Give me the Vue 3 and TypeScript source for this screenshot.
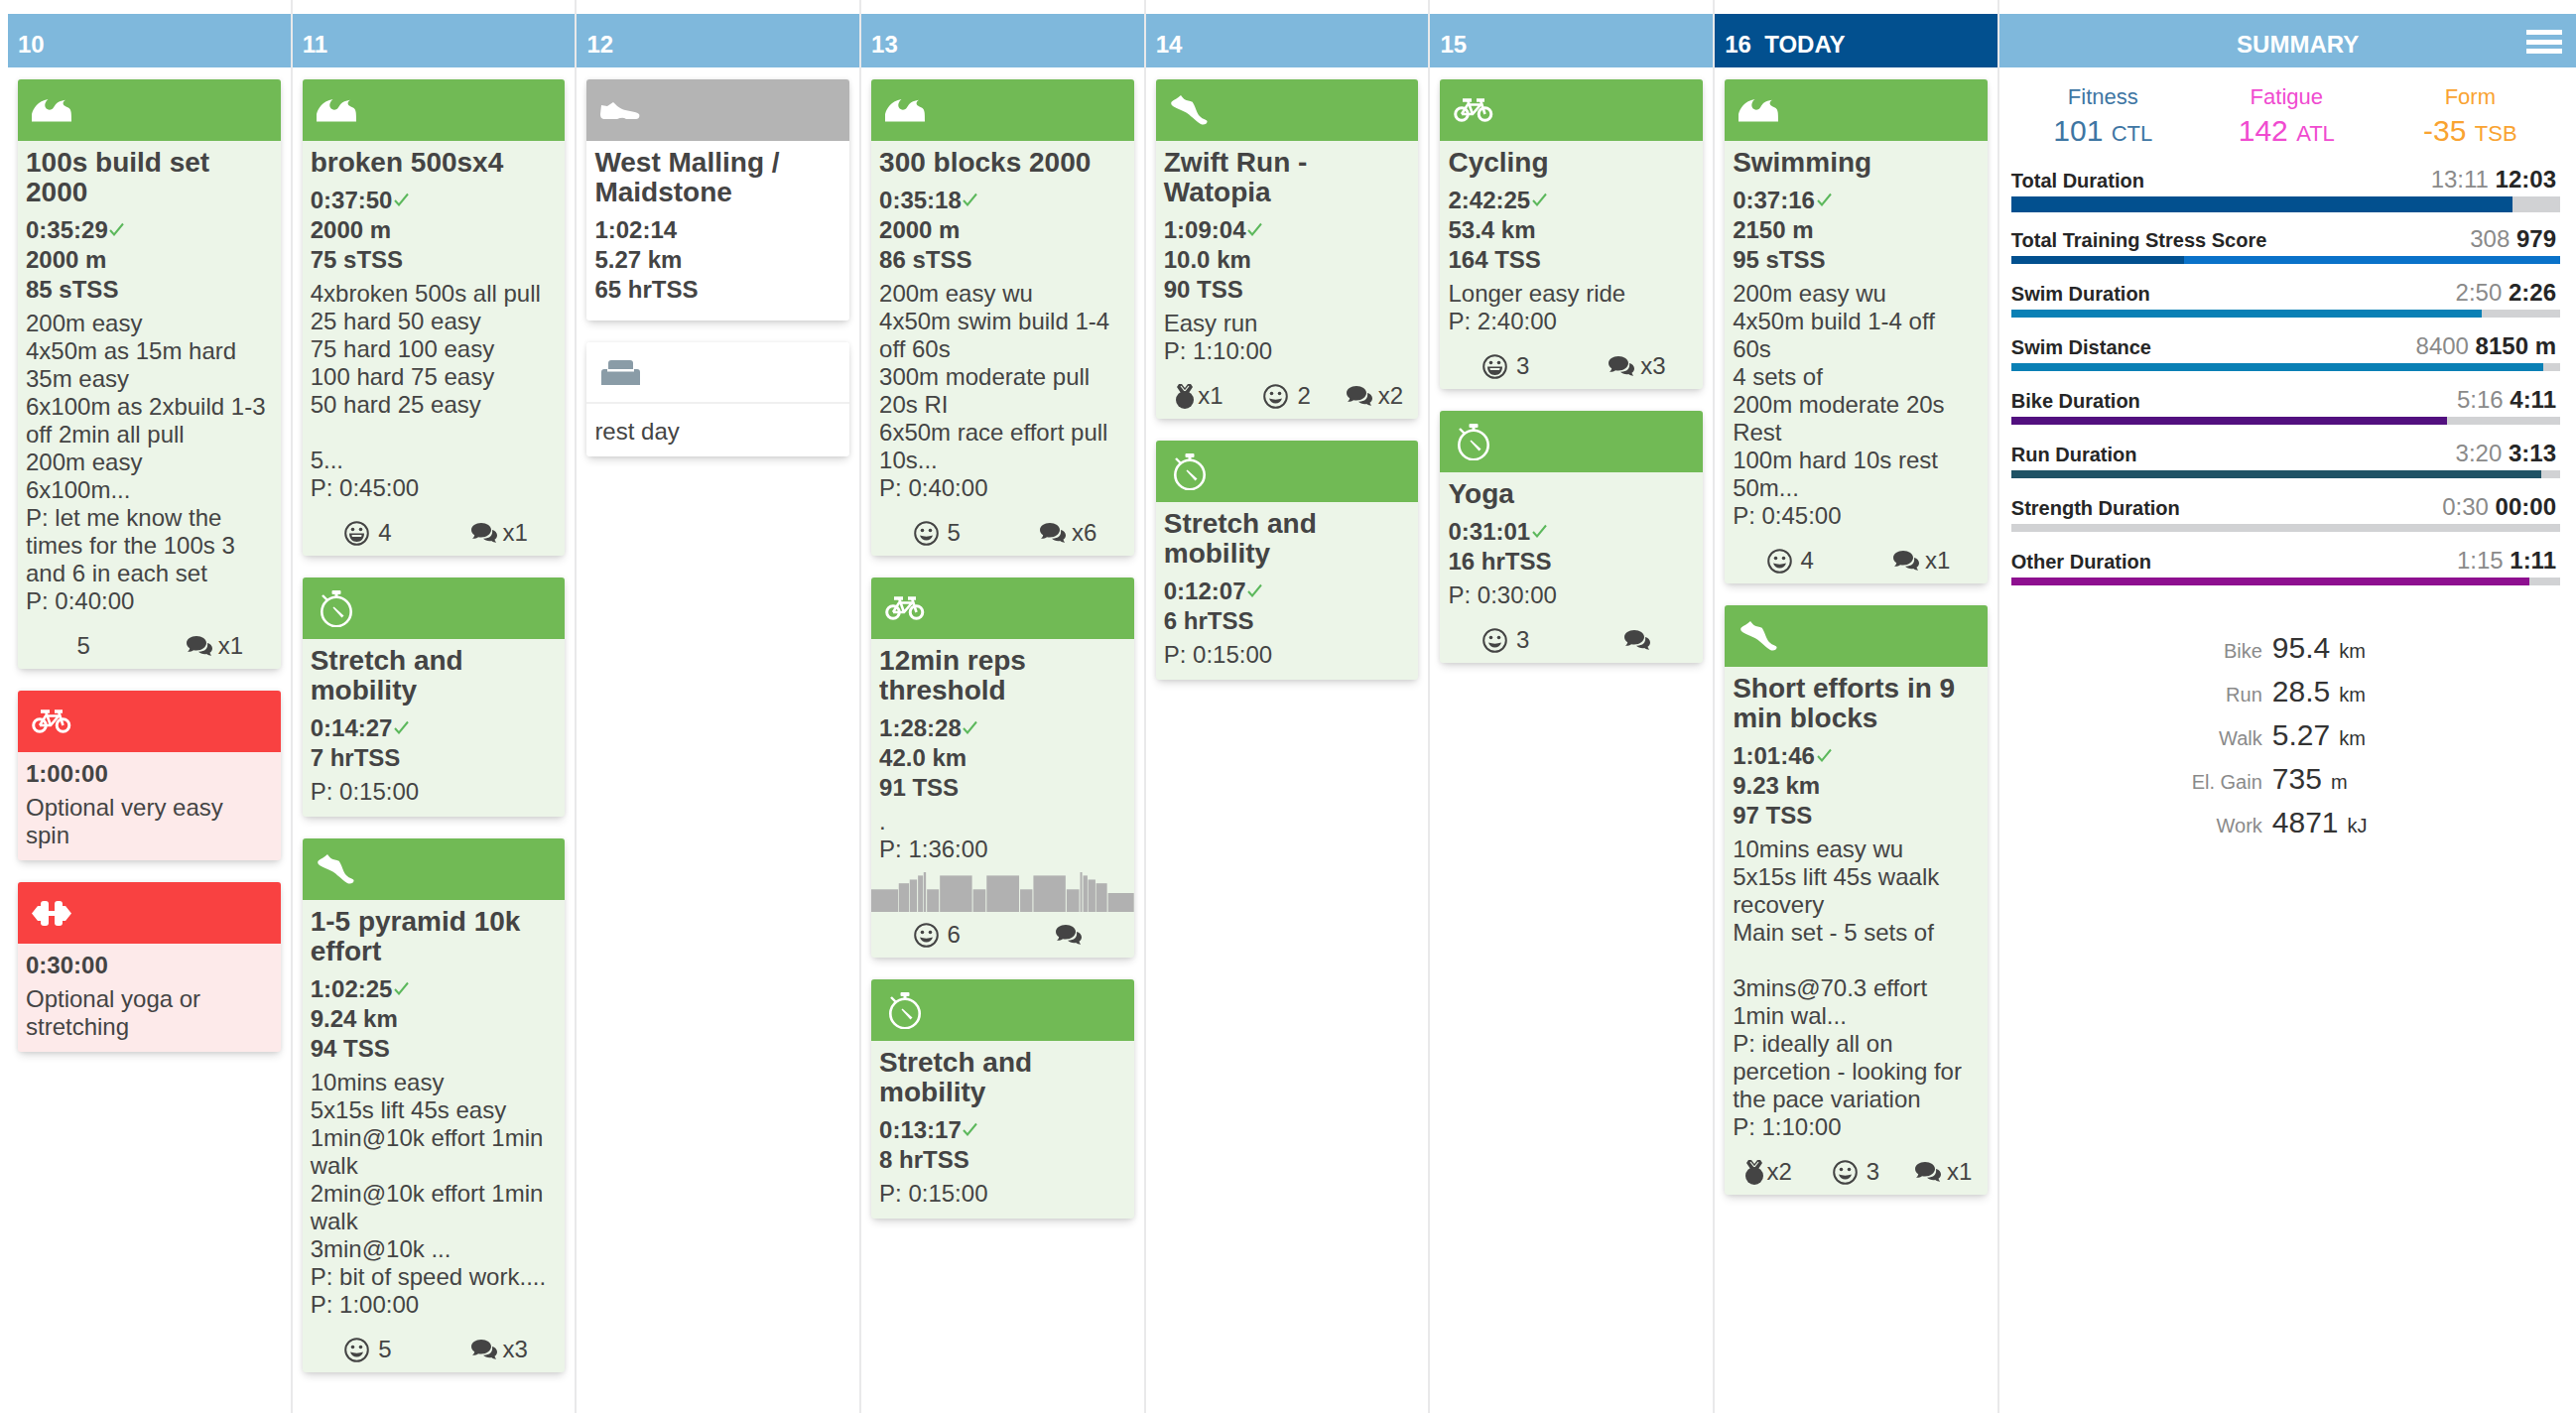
<template>
  <div class="board">
    <section v-for="day in days" :key="day.label" class="day">
      <header class="day-head" :class="{ today: day.today }">{{ day.label }}</header>
      <div class="day-cards">
        <article v-for="(card, i) in day.cards" :key="i" class="card" :class="card.tone">
          <div class="card-head">
            <span class="sport">
              <svg
                :width="icons[card.icon].w"
                :height="icons[card.icon].h"
                :viewBox="`0 0 ${icons[card.icon].w} ${icons[card.icon].h}`"
                v-html="icons[card.icon].body"
              ></svg>
            </span>
          </div>
          <div class="card-body">
            <h3 v-if="card.title" class="title">{{ card.title }}</h3>
            <div v-if="card.time || card.stats" class="stats">
              <div v-if="card.time">
                {{ card.time }}
                <svg v-if="card.done" class="check" width="15" height="14" viewBox="0 0 15 14">
                  <path d="M1 8l4 4.500L14 1.500" fill="none" stroke="#5cb85c" stroke-width="2" />
                </svg>
              </div>
              <div v-for="s in card.stats" :key="s">{{ s }}</div>
            </div>
            <p v-if="card.desc" class="desc">{{ card.desc }}</p>
          </div>
          <svg v-if="card.chart" class="chart" viewBox="0 0 792 118" preserveAspectRatio="none">
            <rect
              v-for="(b, j) in workout"
              :key="j"
              :x="b[0]"
              :y="118 - b[2]"
              :width="b[1] - b[0]"
              :height="b[2]"
              fill="#b1b1b1"
            />
          </svg>
          <footer v-if="hasFooter(card)" class="card-foot" :class="{ chartfoot: card.chart }">
            <span v-if="card.medals" class="foot-item tight">
              <svg width="18" height="25" viewBox="0 0 18 25" v-html="medalIcon"></svg>x{{ card.medals }}
            </span>
            <span v-if="card.feel !== undefined" class="foot-item">
              <svg v-if="card.mood !== 'none'" width="25" height="25" viewBox="0 0 25 25" v-html="card.mood === 'grin' ? grinIcon : smileIcon"></svg>
              {{ card.feel }}
            </span>
            <span v-if="card.comments !== undefined" class="foot-item talk">
              <svg width="26" height="20" viewBox="0 0 26 20" v-html="commentIcon"></svg>
              <template v-if="card.comments">x{{ card.comments }}</template>
            </span>
          </footer>
        </article>
      </div>
    </section>

    <aside class="summary">
      <header class="summary-head">
        SUMMARY
        <span class="burger"><i></i><i></i><i></i></span>
      </header>
      <div class="fitness">
        <div v-for="f in fitness" :key="f.name" class="fit" :style="{ color: f.color }">
          <div class="fit-name">{{ f.name }}</div>
          <div class="fit-val">{{ f.value }} <small>{{ f.unit }}</small></div>
        </div>
      </div>
      <div class="totals">
        <div v-for="r in rows" :key="r.name" class="total">
          <div class="total-line">
            <span class="total-name">{{ r.name }}</span>
            <span class="total-vals"><span class="planned">{{ r.planned }}</span> <b>{{ r.actual }}</b></span>
          </div>
          <div class="bar" :class="{ thick: r.thick }" :style="{ background: r.track || '#d1d2d4' }">
            <div class="bar-fill" :style="{ width: r.pct + '%', background: r.color }"></div>
          </div>
        </div>
      </div>
      <div class="distances">
        <div v-for="d in distances" :key="d.name" class="dist">
          <span class="dist-name">{{ d.name }}</span>
          <span class="dist-val">{{ d.value }}</span>
          <span class="dist-unit">{{ d.unit }}</span>
        </div>
      </div>
    </aside>
  </div>
</template>

<script setup lang="ts">
type IconName = 'swim' | 'run' | 'walk' | 'bike' | 'clock' | 'weights' | 'rest'

interface Card {
  icon: IconName
  tone: 'done' | 'missed' | 'plain'
  title?: string
  time?: string
  done?: boolean
  stats?: string[]
  desc?: string
  chart?: boolean
  medals?: number
  feel?: number
  mood?: 'smile' | 'grin' | 'none'
  comments?: number
}

const W = '#fff'

const icons: Record<IconName, { w: number; h: number; body: string }> = {
  swim: {
    w: 40,
    h: 23,
    body: `<path fill="${W}" d="M0 22.500V15C1.500 9 6 2 16.500 0 13.500 2.500 12.500 6 14 8.500c1.500 2.500 5.500 3 7.500.5C23.500 6.500 24 2 34 .7c-3 1.800-3 4.300-1 5.800 2 1.500 5 2 5.500 3.500 1.500 2 1.500 6 1.500 12.500z"/>`
  },
  run: {
    w: 37,
    h: 30,
    body: `<path fill="${W}" d="M10 0C7 3 3 4.500.8 6.500-.5 8 .5 10 2 11c4 2.500 9 4 13 6.300 4 2.200 10 8.700 15 11.700 3 1.500 7 0 6.500-3-1.500-2-5.500-2-8.500-6-2-3-4-10-6.300-13.300-2.700-1.200-5.700-1.200-8.200-2.700C12 3 11 1 10 0z"/>`
  },
  walk: {
    w: 40,
    h: 17,
    body: `<path fill="${W}" d="M1 3c2 0 4 1 6 1 2-1 4-3 6-4 3 3 5 5 9 7 5 2 14 2 17 5 1 2 0 5-3 5H26c-3-2-6-1-9 0H5c-4 0-5-2-5-5z"/>`
  },
  bike: {
    w: 40,
    h: 24,
    body: `<g fill="none" stroke="${W}" stroke-width="3"><circle cx="8" cy="16" r="6.300"/><circle cx="31.500" cy="16" r="6.300"/><path d="M8 16L14 6.500H27L19 16H8M14 2l5 14M27 2l4.500 14" stroke-width="2.600"/><path d="M9 2h9M23 2h8" stroke-width="3.400"/></g>`
  },
  clock: {
    w: 34,
    h: 37,
    body: `<rect x="12.500" y="0" width="9" height="4" rx="1" fill="${W}"/><rect x="15.500" y="3" width="3" height="4" fill="${W}"/><path d="M3 5l5 5" stroke="${W}" stroke-width="2.400"/><circle cx="17" cy="21.500" r="14.700" fill="none" stroke="${W}" stroke-width="2.600"/><path d="M14.500 16.500l10 9-2 2-9-10z" fill="${W}"/>`
  },
  weights: {
    w: 40,
    h: 25,
    body: `<g fill="${W}"><rect x="9" y="0" width="8" height="25" rx="3"/><rect x="23" y="0" width="8" height="25" rx="3"/><rect x="15" y="10" width="10" height="5"/><path d="M10 5H6L0 12.500 6 20h4zM30 5h4l6 7.500-6 7.500h-4z"/></g>`
  },
  rest: {
    w: 39,
    h: 25,
    body: `<g fill="#8a9ca7"><path d="M7 3a3 3 0 0 1 3-3h19a3 3 0 0 1 3 3v6H7z"/><path d="M0 12a3 3 0 0 1 3-3h3v2.500h27V9h3a3 3 0 0 1 3 3v13H0z"/></g>`
  }
}

const INK = '#444'
const smileIcon = `<circle cx="12.500" cy="12.500" r="11.300" fill="none" stroke="${INK}" stroke-width="2"/><circle cx="8.500" cy="9.500" r="1.800" fill="${INK}"/><circle cx="16.500" cy="9.500" r="1.800" fill="${INK}"/><path d="M6 14.500c1 3.500 3.500 5 6.500 5s5.500-1.500 6.500-5c-4 1.500-9 1.500-13 0z" fill="${INK}"/>`
const grinIcon = `<circle cx="12.500" cy="12.500" r="11.300" fill="none" stroke="${INK}" stroke-width="2"/><circle cx="8.500" cy="8.500" r="1.800" fill="${INK}"/><circle cx="16.500" cy="8.500" r="1.800" fill="${INK}"/><path d="M5 12.500h15c0 5-3 8.500-7.500 8.500S5 17.500 5 12.500z" fill="${INK}"/><path d="M7.500 14h10c0 1-.2 1.500-.5 2H8c-.3-.5-.5-1-.5-2z" fill="#ecf5e8"/>`
const commentIcon = `<path fill="${INK}" d="M10 0c5.500 0 10 3 10 7s-4.500 7.500-10 7.500c-1 0-2 0-3-.3C5.500 15.500 3 16 1 15.800c1.200-1 2-2.300 2.200-3.600C1.200 11 0 9 0 7c0-4 4.500-7 10-7z"/><path fill="${INK}" d="M21 7c3 .8 5 3 5 5.500 0 1.800-1 3.300-2.500 4.300.2 1 .8 2 1.700 2.900-2 0-3.700-.7-5-1.700-.6.100-1.200.2-1.700.2-2.800 0-5-1-6.500-2.500 6 .3 10-3 9-8.700z"/>`
const medalIcon = `<path d="M3 0h3l3 4 3-4h3l2 3-4 6H5L1 3z" fill="${INK}"/><path d="M5 2l4 5 4-5" fill="none" stroke="#ecf5e8" stroke-width="1.200"/><circle cx="9" cy="16" r="9" fill="${INK}"/>`

// [start, end, height] in the bar chart's own units
const workout: [number, number, number][] = [
  [0, 81, 67], [83, 114, 85], [116, 138, 96], [141, 156, 108], [158, 165, 118],
  [168, 204, 67], [207, 304, 108], [307, 345, 67], [348, 446, 108], [449, 486, 67],
  [489, 586, 108], [589, 627, 67], [630, 636, 118], [639, 652, 108], [654, 676, 96],
  [678, 711, 85], [714, 792, 56]
]

const hasFooter = (c: Card) => c.feel !== undefined || c.comments !== undefined || !!c.medals

const stretch = (time: string, tss: string): Card => ({
  icon: 'clock',
  tone: 'done',
  title: 'Stretch and\nmobility',
  time,
  done: true,
  stats: [tss],
  desc: 'P: 0:15:00'
})

const days: { label: string; today?: boolean; cards: Card[] }[] = [
  {
    label: '10',
    cards: [
      {
        icon: 'swim',
        tone: 'done',
        title: '100s build set\n2000',
        time: '0:35:29',
        done: true,
        stats: ['2000 m', '85 sTSS'],
        desc: '200m easy\n4x50m as 15m hard\n35m easy\n6x100m as 2xbuild 1-3\noff 2min all pull\n200m easy\n6x100m...\nP: let me know the\ntimes for the 100s 3\nand 6 in each set\nP: 0:40:00',
        feel: 5,
        mood: 'none',
        comments: 1
      },
      { icon: 'bike', tone: 'missed', time: '1:00:00', desc: 'Optional very easy\nspin' },
      { icon: 'weights', tone: 'missed', time: '0:30:00', desc: 'Optional yoga or\nstretching' }
    ]
  },
  {
    label: '11',
    cards: [
      {
        icon: 'swim',
        tone: 'done',
        title: 'broken 500sx4',
        time: '0:37:50',
        done: true,
        stats: ['2000 m', '75 sTSS'],
        desc: '4xbroken 500s all pull\n25 hard 50 easy\n75 hard 100 easy\n100 hard 75 easy\n50 hard 25 easy\n\n5...\nP: 0:45:00',
        feel: 4,
        mood: 'grin',
        comments: 1
      },
      stretch('0:14:27', '7 hrTSS'),
      {
        icon: 'run',
        tone: 'done',
        title: '1-5 pyramid 10k\neffort',
        time: '1:02:25',
        done: true,
        stats: ['9.24 km', '94 TSS'],
        desc: '10mins easy\n5x15s lift 45s easy\n1min@10k effort 1min\nwalk\n2min@10k effort 1min\nwalk\n3min@10k ...\nP: bit of speed work....\nP: 1:00:00',
        feel: 5,
        comments: 3
      }
    ]
  },
  {
    label: '12',
    cards: [
      {
        icon: 'walk',
        tone: 'plain',
        title: 'West Malling /\nMaidstone',
        time: '1:02:14',
        stats: ['5.27 km', '65 hrTSS']
      },
      { icon: 'rest', tone: 'plain', desc: 'rest day' }
    ]
  },
  {
    label: '13',
    cards: [
      {
        icon: 'swim',
        tone: 'done',
        title: '300 blocks 2000',
        time: '0:35:18',
        done: true,
        stats: ['2000 m', '86 sTSS'],
        desc: '200m easy wu\n4x50m swim build 1-4\noff 60s\n300m moderate pull\n20s RI\n6x50m race effort pull\n10s...\nP: 0:40:00',
        feel: 5,
        comments: 6
      },
      {
        icon: 'bike',
        tone: 'done',
        title: '12min reps\nthreshold',
        time: '1:28:28',
        done: true,
        stats: ['42.0 km', '91 TSS'],
        desc: '.\nP: 1:36:00',
        chart: true,
        feel: 6,
        comments: 0
      },
      stretch('0:13:17', '8 hrTSS')
    ]
  },
  {
    label: '14',
    cards: [
      {
        icon: 'run',
        tone: 'done',
        title: 'Zwift Run -\nWatopia',
        time: '1:09:04',
        done: true,
        stats: ['10.0 km', '90 TSS'],
        desc: 'Easy run\nP: 1:10:00',
        medals: 1,
        feel: 2,
        comments: 2
      },
      stretch('0:12:07', '6 hrTSS')
    ]
  },
  {
    label: '15',
    cards: [
      {
        icon: 'bike',
        tone: 'done',
        title: 'Cycling',
        time: '2:42:25',
        done: true,
        stats: ['53.4 km', '164 TSS'],
        desc: 'Longer easy ride\nP: 2:40:00',
        feel: 3,
        mood: 'grin',
        comments: 3
      },
      {
        icon: 'clock',
        tone: 'done',
        title: 'Yoga',
        time: '0:31:01',
        done: true,
        stats: ['16 hrTSS'],
        desc: 'P: 0:30:00',
        feel: 3,
        comments: 0
      }
    ]
  },
  {
    label: '16  TODAY',
    today: true,
    cards: [
      {
        icon: 'swim',
        tone: 'done',
        title: 'Swimming',
        time: '0:37:16',
        done: true,
        stats: ['2150 m', '95 sTSS'],
        desc: '200m easy wu\n4x50m build 1-4 off\n60s\n4 sets of\n200m moderate 20s\nRest\n100m hard 10s rest\n50m...\nP: 0:45:00',
        feel: 4,
        comments: 1
      },
      {
        icon: 'run',
        tone: 'done',
        title: 'Short efforts in 9\nmin blocks',
        time: '1:01:46',
        done: true,
        stats: ['9.23 km', '97 TSS'],
        desc: '10mins easy wu\n5x15s lift 45s waalk\nrecovery\nMain set - 5 sets of\n\n3mins@70.3 effort\n1min wal...\nP: ideally all on\npercetion - looking for\nthe pace variation\nP: 1:10:00',
        medals: 2,
        feel: 3,
        comments: 1
      }
    ]
  }
]

const fitness = [
  { name: 'Fitness', value: '101', unit: 'CTL', color: '#3e76a3' },
  { name: 'Fatigue', value: '142', unit: 'ATL', color: '#f04bd0' },
  { name: 'Form', value: '-35', unit: 'TSB', color: '#f9a331' }
]

const rows: { name: string; planned: string; actual: string; pct: number; color: string; thick?: boolean; track?: string }[] = [
  { name: 'Total Duration', planned: '13:11', actual: '12:03', pct: 91.4, color: '#02508f', thick: true },
  { name: 'Total Training Stress Score', planned: '308', actual: '979', pct: 31.4, color: '#02508f', track: '#0a72c9' },
  { name: 'Swim Duration', planned: '2:50', actual: '2:26', pct: 85.7, color: '#0a80b5' },
  { name: 'Swim Distance', planned: '8400', actual: '8150 m', pct: 96.9, color: '#0a80b5' },
  { name: 'Bike Duration', planned: '5:16', actual: '4:11', pct: 79.4, color: '#52107f' },
  { name: 'Run Duration', planned: '3:20', actual: '3:13', pct: 96.6, color: '#1f5265' },
  { name: 'Strength Duration', planned: '0:30', actual: '00:00', pct: 0, color: '#d1d2d4' },
  { name: 'Other Duration', planned: '1:15', actual: '1:11', pct: 94.4, color: '#8e1090' }
]

const distances = [
  { name: 'Bike', value: '95.4', unit: 'km' },
  { name: 'Run', value: '28.5', unit: 'km' },
  { name: 'Walk', value: '5.27', unit: 'km' },
  { name: 'El. Gain', value: '735', unit: 'm' },
  { name: 'Work', value: '4871', unit: 'kJ' }
]
</script>

<style>
html,
body {
  margin: 0;
  background: #fff;
  overflow: hidden;
}
</style>

<style scoped>
.board {
  display: grid;
  grid-template-columns: repeat(7, 286.7px) 1fr;
  height: 1424px;
  padding-left: 8px;
  box-sizing: border-box;
  font-family: 'Liberation Sans', Arial, sans-serif;
  color: #444;
  overflow: hidden;
}

.day {
  border-right: 2px solid #e9e9ea;
  min-width: 0;
}

.day-head,
.summary-head {
  margin-top: 14px;
  height: 54px;
  line-height: 62px;
  background: #7fb8dc;
  color: #fff;
  font-size: 24px;
  font-weight: 700;
  padding-left: 10px;
  white-space: pre;
}

.day-head.today {
  background: #02508f;
}

.day-cards {
  display: flex;
  flex-direction: column;
  gap: 22px;
  padding: 12px 10px 0;
}

.card {
  border-radius: 3px;
  box-shadow: 0 0 5px rgba(0, 0, 0, 0.09), 0 5px 8px -2px rgba(0, 0, 0, 0.16);
  overflow: hidden;
}

.card.done {
  background: #ecf5e8;
}
.card.missed {
  background: #fdeaea;
}
.card.plain {
  background: #fff;
}

.card-head {
  height: 62px;
  display: flex;
  align-items: center;
  padding-left: 14px;
}

.done .card-head {
  background: #71ba55;
}
.missed .card-head {
  background: #f94141;
}
.plain .card-head {
  background: #b4b4b4;
}
.plain:has(.desc) .card-head {
  background: #fff;
  border-bottom: 2px solid #f0f0f0;
  box-sizing: border-box;
}

.sport {
  width: 40px;
  display: flex;
  justify-content: center;
}

.card-body {
  padding: 7px 8px 11px;
}

.card:has(.card-foot) .card-body {
  padding-bottom: 0;
}

.title {
  margin: 0 0 8px;
  font-size: 28px;
  line-height: 30px;
  font-weight: 700;
  white-space: pre-line;
}

.stats {
  font-size: 24px;
  line-height: 30px;
  font-weight: 700;
  margin-bottom: 5px;
}

.check {
  margin-left: -5px;
  vertical-align: 2px;
}

.desc {
  margin: 0;
  font-size: 24px;
  line-height: 28px;
  white-space: pre-line;
}

.card-body > .desc:first-child {
  margin-top: 7px;
}

.chart {
  display: block;
  width: 100%;
  height: 40px;
  margin-top: 9px;
}

.card-foot {
  display: flex;
  align-items: center;
  height: 46px;
  margin-top: 8px;
  font-size: 24px;
}

.card-foot.chartfoot {
  margin-top: 0;
}

.foot-item {
  flex: 1;
  display: flex;
  align-items: center;
  justify-content: center;
  gap: 9px;
}

.foot-item.tight {
  gap: 4px;
}

.foot-item.talk {
  gap: 6px;
}

.summary {
  min-width: 0;
}

.summary-head {
  position: relative;
  padding-left: 20px;
  text-align: center;
}

.burger {
  position: absolute;
  right: 14px;
  top: 16px;
  width: 36px;
  height: 24px;
  display: flex;
  flex-direction: column;
  justify-content: space-between;
}

.burger i {
  display: block;
  height: 5px;
  background: #fff;
}

.fitness {
  display: grid;
  grid-template-columns: repeat(3, 185px);
  padding: 18px 0 0 12px;
  text-align: center;
}

.fit-name {
  font-size: 22px;
  line-height: 24px;
}

.fit-val {
  font-size: 30px;
  line-height: 36px;
  height: 36px;
  margin-top: 4px;
}

.fit-val small {
  font-size: 22px;
}

.totals {
  padding: 19px 16px 0 12px;
}

.total {
  margin-bottom: 17px;
}

.total:first-child {
  margin-bottom: 15px;
}

.total-line {
  display: flex;
  justify-content: space-between;
  align-items: baseline;
  height: 24px;
  line-height: 24px;
  padding-right: 4px;
}

.total-name {
  font-size: 20px;
  font-weight: 700;
  color: #262626;
}

.total-vals {
  font-size: 24px;
  color: #262626;
}

.planned {
  color: #8a8a8a;
}

.bar {
  height: 8px;
  margin-top: 5px;
}

.bar.thick {
  height: 16px;
}

.bar-fill {
  height: 100%;
}

.distances {
  padding-top: 24px;
}

.dist {
  display: grid;
  grid-template-columns: 253px auto 1fr;
  column-gap: 10px;
  align-items: baseline;
  height: 44px;
  line-height: 44px;
  padding-left: 12px;
  box-sizing: border-box;
}

.dist-name {
  text-align: right;
  font-size: 20px;
  color: #8a8a8a;
}

.dist-val {
  font-size: 30px;
  color: #333;
}

.dist-unit {
  font-size: 20px;
  color: #333;
  margin-left: -1px;
}
</style>
